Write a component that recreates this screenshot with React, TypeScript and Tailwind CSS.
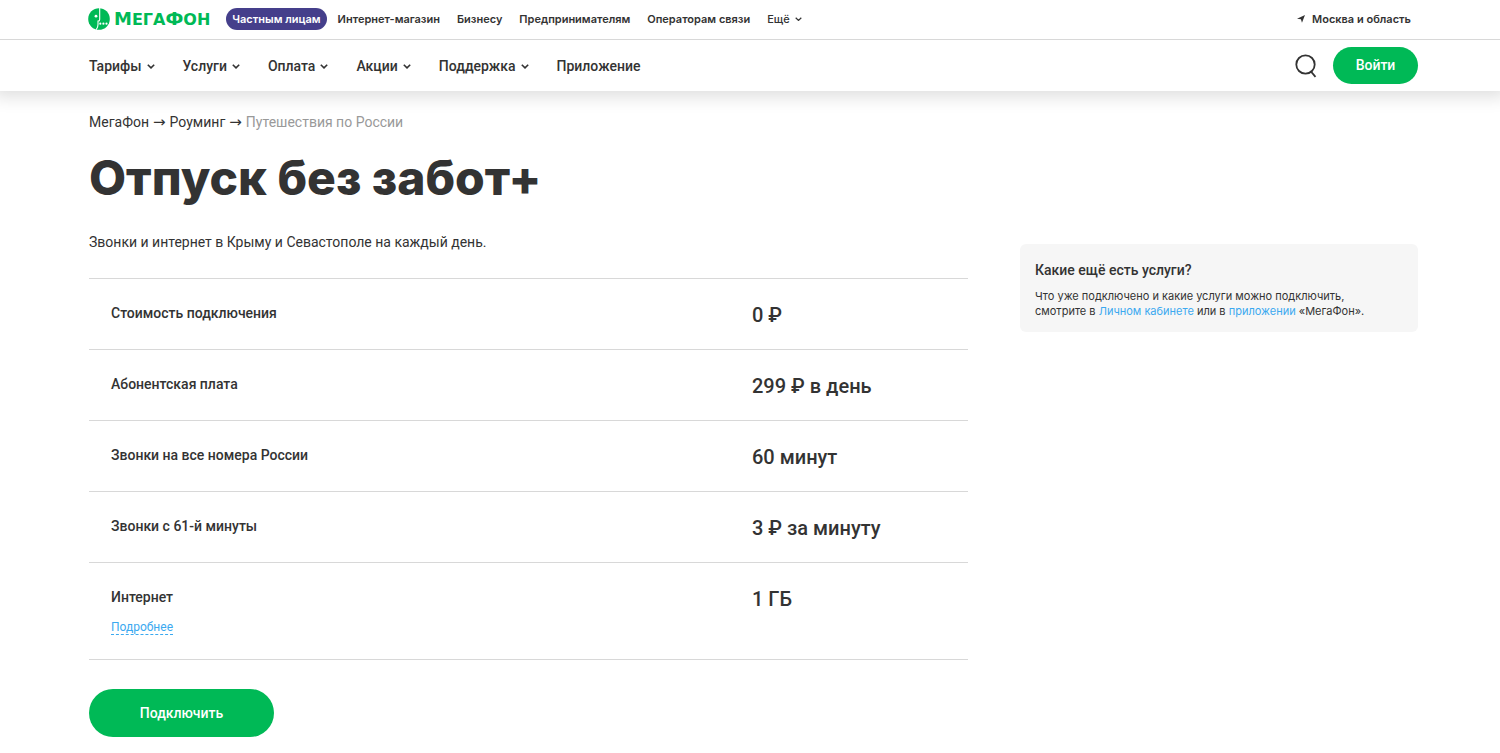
import React from "react";

const primaryNav = ["Тарифы", "Услуги", "Оплата", "Акции", "Поддержка"];
const segments = ["Интернет-магазин", "Бизнесу", "Предпринимателям", "Операторам связи"];

const rows = [
  { label: "Стоимость подключения", value: "0 ₽" },
  { label: "Абонентская плата", value: "299 ₽ в день" },
  { label: "Звонки на все номера России", value: "60 минут" },
  { label: "Звонки с 61-й минуты", value: "3 ₽ за минуту" },
  { label: "Интернет", value: "1 ГБ", more: true },
];

function Chevron({ className }: { className: string }) {
  return (
    <svg viewBox="0 0 8 5" className={className} fill="none" stroke="currentColor" aria-hidden="true">
      <path d="M0.8 0.8 4 3.9 7.2 0.8" />
    </svg>
  );
}

function Logo() {
  return (
    <a href="#" className="flex items-center gap-1 text-[#00b956]">
      <svg viewBox="0 0 22 22" className="size-[22px]" aria-hidden="true">
        <circle cx="11" cy="11" r="10.8" fill="#00b956" />
        <path d="M11.7 0v11.4c0 1.1-.6 1.700-1.700 1.700v3.400c0 2.200-.6 3.700-1.800 5.200" fill="none" stroke="#fff" strokeWidth="1.1" />
        <circle cx="8" cy="8.200" r="1.400" fill="#fff" />
        <circle cx="12.300" cy="15.700" r="1.100" fill="#fff" />
        <circle cx="15.400" cy="15.700" r="1.100" fill="#fff" />
        <circle cx="18.500" cy="15.700" r="1.100" fill="#fff" />
      </svg>
      <span className="flex items-baseline font-['DejaVu_Sans',sans-serif] text-[18px] leading-5 font-bold">
        М<span className="text-[16px]">ЕГА</span>Ф<span className="text-[16px]">ОН</span>
      </span>
    </a>
  );
}

export default function App() {
  return (
    <div className="min-h-screen overflow-x-hidden bg-white font-['Roboto','Liberation_Sans',sans-serif] text-[#333]">
      <header className="shadow-[0_0_16px_6px_rgba(0,0,0,0.13)]">
        <div className="flex h-10 items-center border-b border-[#d8d8d8] pr-[89px] pb-px pl-[88px] font-['Inter','Liberation_Sans',sans-serif]">
          <Logo />
          <nav className="ml-4 flex items-center gap-[5px] text-[11px] font-semibold">
            <a href="#" className="flex h-[22px] items-center rounded-full bg-[#453f8b] px-[6px] text-white">
              Частным лицам
            </a>
            {segments.map((s) => (
              <a key={s} href="#" className="px-[6px]">
                {s}
              </a>
            ))}
            <button type="button" className="flex items-center gap-[5px] px-[6px] font-medium">
              Ещё
              <Chevron className="w-[7px] [stroke-width:1.4]" />
            </button>
          </nav>
          <button type="button" className="ml-auto flex items-center gap-[7px] text-[11px] font-semibold">
            <svg viewBox="0 0 9 9" className="size-2" fill="currentColor" aria-hidden="true">
              <path d="M9 0 5.6 8.6 4.4 4.9 0 4.1Z" />
            </svg>
            Москва и область
          </button>
        </div>
        <div className="flex h-[51px] items-center pr-[82px] pl-[89px]">
          <nav className="flex items-center gap-7 pt-px text-[14px] font-medium">
            {primaryNav.map((item) => (
              <button key={item} type="button" className="flex items-center gap-[5px]">
                {item}
                <Chevron className="w-2 [stroke-width:1.6]" />
              </button>
            ))}
            <a href="#">Приложение</a>
          </nav>
          <button type="button" aria-label="Поиск" className="ml-auto">
            <svg viewBox="0 0 22 24" className="h-6 w-[22px]" fill="none" stroke="currentColor" strokeWidth="1.8" aria-hidden="true">
              <circle cx="10.5" cy="10.5" r="9.2" />
              <path d="m15.5 17 5 5.8" />
            </svg>
          </button>
          <button type="button" className="ml-4 h-[37px] w-[85px] rounded-full bg-[#00b956] text-[14px] font-medium text-white">
            Войти
          </button>
        </div>
      </header>

      <main className="pr-[82px] pl-[89px]">
        <nav className="flex items-center gap-1 pt-[21px] text-[14px] leading-5" aria-label="Навигация">
          <a href="#">МегаФон</a>
          <span className="font-['DejaVu_Sans',sans-serif] text-[15px]">→</span>
          <a href="#">Роуминг</a>
          <span className="font-['DejaVu_Sans',sans-serif] text-[15px]">→</span>
          <span className="text-[#999]">Путешествия по России</span>
        </nav>
        <h1 className="mt-4 font-['Inter','Liberation_Sans',sans-serif] text-[48px] leading-[60px] font-extrabold">Отпуск без забот+</h1>
        <div className="mt-6 flex items-start gap-[52px]">
          <div className="min-w-0 flex-1">
            <p className="text-[14px] leading-5">Звонки и интернет в Крыму и Севастополе на каждый день.</p>
            <table className="mt-[26px] w-full border-t border-[#d8d8d8]">
              <tbody>
                {rows.map((r) => (
                  <tr key={r.label} className="border-b border-[#d8d8d8]">
                    <th scope="row" className="pt-6 pb-[22px] pl-[22px] text-left align-top text-[14px] leading-5 font-medium">
                      {r.label}
                      {r.more && (
                        <div className="mt-3 pb-[2px] text-[12px] leading-4 font-normal">
                          <a href="#" className="border-b border-dashed border-[#3ba9f0] text-[#3ba9f0]">
                            Подробнее
                          </a>
                        </div>
                      )}
                    </th>
                    <td className="w-[216px] pt-6 pb-[22px] align-top text-[20px] leading-6 font-medium">{r.value}</td>
                  </tr>
                ))}
              </tbody>
            </table>
            <button type="button" className="mt-[29px] h-12 w-[185px] rounded-full bg-[#00b956] text-[14px] font-medium text-white">
              Подключить
            </button>
          </div>
          <aside className="mt-3 w-[398px] rounded-md bg-[#f6f6f6] px-[15px] pt-4 pb-[13px]">
            <h2 className="text-[14px] leading-5 font-medium">Какие ещё есть услуги?</h2>
            <p className="mt-[9px] font-['Inter','Liberation_Sans',sans-serif] text-[11px] leading-[15px]">
              Что уже подключено и какие услуги можно подключить,
              <br />
              смотрите в <a href="#" className="text-[#3ba9f0]">Личном кабинете</a> или в{" "}
              <a href="#" className="text-[#3ba9f0]">приложении</a> «МегаФон».
            </p>
          </aside>
        </div>
      </main>
    </div>
  );
}
